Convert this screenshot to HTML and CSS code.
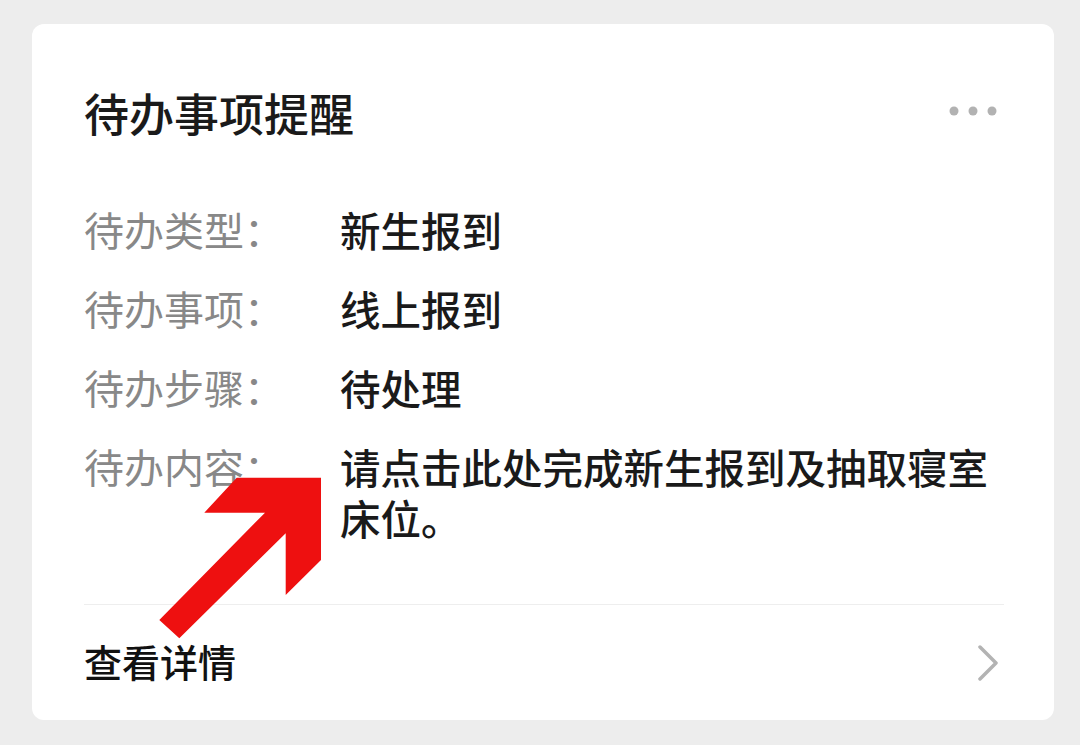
FILE: index.html
```html
<!DOCTYPE html>
<html lang="zh-CN">
<head>
  <meta charset="UTF-8">
  <meta name="viewport" content="width=device-width, initial-scale=1.0">
  <link rel="stylesheet" href="styles.css">
  <title>待办事项提醒</title>
</head>
<body>
  <div class="page">
    <div class="card">
      <div class="card-header">
        <h1 class="title">待办事项提醒</h1>
        <svg class="more" width="48" height="10" viewBox="0 0 48 10">
          <circle cx="5" cy="5" r="4.5" fill="#b2b2b2"/>
          <circle cx="24" cy="5" r="4.5" fill="#b2b2b2"/>
          <circle cx="43" cy="5" r="4.5" fill="#b2b2b2"/>
        </svg>
      </div>

      <div class="info">
        <div class="row">
          <span class="label">待办类型：</span>
          <span class="value">新生报到</span>
        </div>
        <div class="row">
          <span class="label">待办事项：</span>
          <span class="value">线上报到</span>
        </div>
        <div class="row">
          <span class="label">待办步骤：</span>
          <span class="value">待处理</span>
        </div>
        <div class="row">
          <span class="label">待办内容：</span>
          <span class="value">请点击此处完成新生报到及抽取寝室床位。</span>
        </div>
      </div>

      <div class="card-footer">
        <span class="detail">查看详情</span>
        <svg class="chevron" width="24" height="40" viewBox="0 0 24 40">
          <polyline points="6,4 22,20 6,36" fill="none" stroke="#b3b3b3" stroke-width="3.5" stroke-linecap="round" stroke-linejoin="round"/>
        </svg>
      </div>
    </div>

    <!-- red arrow drawn over the card -->
    <svg class="arrow" width="1080" height="745" viewBox="0 0 1080 745">
      <polygon points="236.7,477.7 321,477.7 321,560 285.7,595 285.7,533.3 179.3,638.3 159.3,620 265,512.7 204.3,512.7" fill="#ee1010"/>
    </svg>
  </div>
</body>
</html>
```

FILE: styles.css
```css
body {
  margin: 0;
  background-color: #ededed;
  font-family: "Noto Sans CJK SC", "Noto Sans", sans-serif;
}

.page {
  position: relative;
  width: 1080px;
  height: 745px;
  padding: 24px 0 0 32px;
  box-sizing: border-box;
}

.card {
  width: 1022px;
  height: 696px;
  box-sizing: border-box;
  background-color: #fff;
  border-radius: 12px;
  padding: 0 50px 0 52px;
  display: flex;
  flex-direction: column;
}

.card-header {
  display: flex;
  justify-content: space-between;
  align-items: center;
  padding-top: 61px;
}

.title {
  margin: 0;
  font-size: 45px;
  line-height: 56px;
  font-weight: 500;
  color: #1a1a1a;
}

.more {
  margin-right: 7px;
  margin-bottom: 4px;
}

.info {
  display: flex;
  flex-direction: column;
  gap: 28px;
  margin-top: 63px;
  padding-bottom: 61px;
  border-bottom: 1px solid #eeeeee;
}

.row {
  display: grid;
  grid-template-columns: 256px 1fr;
  font-size: 40px;
  line-height: 51px;
}

.label {
  color: #888888;
}

.value {
  color: #1a1a1a;
  font-size: 40.5px;
  font-weight: 500;
}

.card-footer {
  flex: 1;
  display: flex;
  justify-content: space-between;
  align-items: center;
  padding-bottom: 4px;
}

.detail {
  font-size: 38px;
  line-height: 50px;
  font-weight: 500;
  color: #111;
}

.chevron {
  margin-right: 6px;
  margin-top: 4px;
}

.arrow {
  position: absolute;
  left: 0;
  top: 0;
  pointer-events: none;
}
```
